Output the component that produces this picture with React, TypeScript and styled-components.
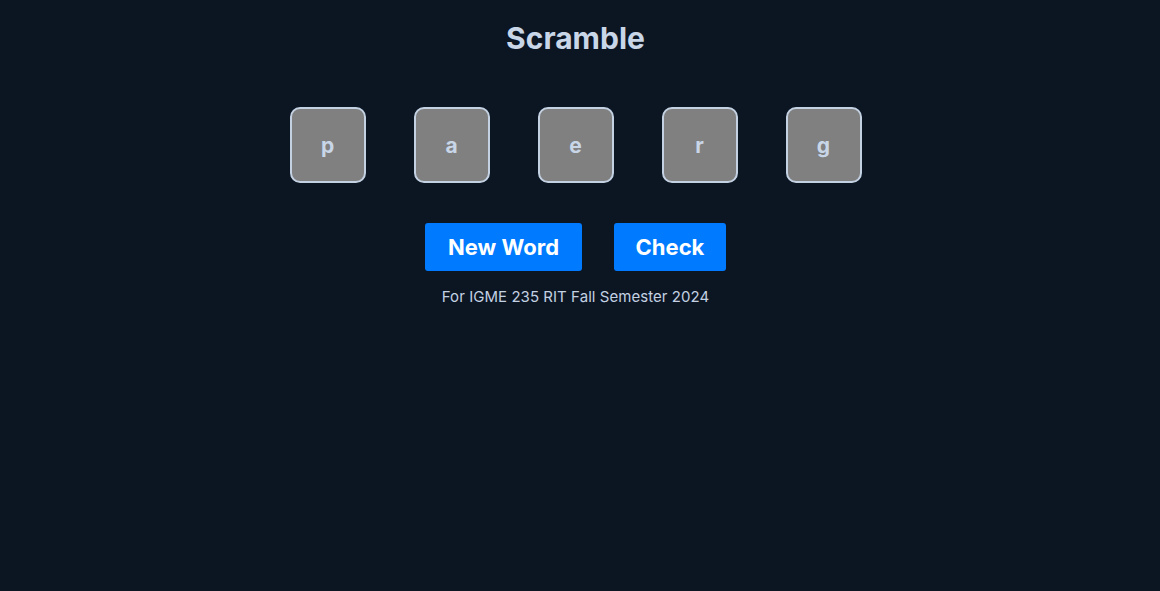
import React from 'react';
import styled, { createGlobalStyle } from 'styled-components';

const GlobalStyle = createGlobalStyle`
  html, body {
    margin: 0;
    padding: 0;
    background-color: #0c1622;
    font-family: 'Inter', 'Noto Sans', sans-serif;
  }
`;

const Page = styled.main`
  min-height: 591px;
  display: flex;
  flex-direction: column;
  align-items: center;
  padding: 20px 9px 0 0;
  box-sizing: border-box;
`;

const Title = styled.h1`
  margin: 0;
  font-size: 30px;
  font-weight: 700;
  color: #c8d6e8;
  line-height: 36px;
`;

const TileRow = styled.div`
  display: flex;
  gap: 48px;
  margin-top: 51px;
`;

const Tile = styled.div`
  width: 76px;
  height: 76px;
  box-sizing: border-box;
  border: 2px solid #c3d1e2;
  border-radius: 10px;
  background-color: #808080;
  display: flex;
  align-items: center;
  justify-content: center;
  font-size: 21px;
  font-weight: 700;
  color: #c8d6e8;
`;

const ButtonRow = styled.div`
  display: flex;
  gap: 32px;
  margin-top: 40px;
`;

const Button = styled.button<{ $width: number }>`
  width: ${(p) => p.$width}px;
  height: 48px;
  border: none;
  border-radius: 3px;
  background-color: #007bff;
  color: #ffffff;
  font-family: 'Inter', 'Noto Sans', sans-serif;
  font-size: 22px;
  font-weight: 700;
  cursor: pointer;
`;

const Footer = styled.p`
  margin: 16px 0 0;
  font-size: 15px;
  letter-spacing: 0.05px;
  color: #c3d1e2;
  line-height: 19px;
`;

const letters = ['p', 'a', 'e', 'r', 'g'];

export default function App() {
  return (
    <>
      <GlobalStyle />
      <Page>
        <Title>Scramble</Title>
        <TileRow>
          {letters.map((l, i) => (
            <Tile key={i}>{l}</Tile>
          ))}
        </TileRow>
        <ButtonRow>
          <Button $width={157}>New Word</Button>
          <Button $width={112}>Check</Button>
        </ButtonRow>
        <Footer>For IGME 235 RIT Fall Semester 2024</Footer>
      </Page>
    </>
  );
}
